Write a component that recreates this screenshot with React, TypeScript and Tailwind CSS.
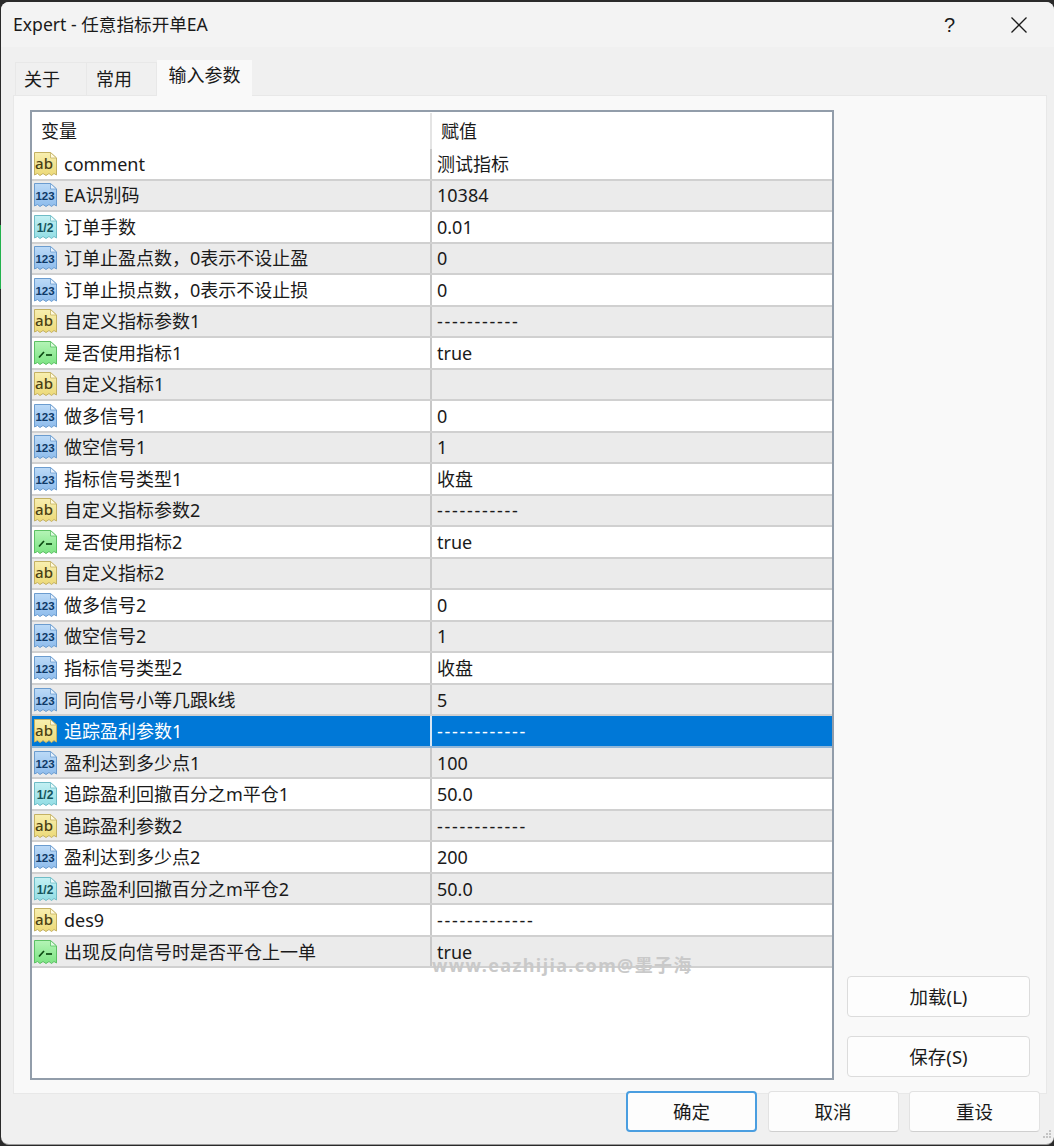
import React from "react";

type Kind = "ab" | "123" | "half" | "bool";
const rows: [Kind, string, string][] = [
  ["ab", "comment", "测试指标"],
  ["123", "EA识别码", "10384"],
  ["half", "订单手数", "0.01"],
  ["123", "订单止盈点数，0表示不设止盈", "0"],
  ["123", "订单止损点数，0表示不设止损", "0"],
  ["ab", "自定义指标参数1", "-----------"],
  ["bool", "是否使用指标1", "true"],
  ["ab", "自定义指标1", ""],
  ["123", "做多信号1", "0"],
  ["123", "做空信号1", "1"],
  ["123", "指标信号类型1", "收盘"],
  ["ab", "自定义指标参数2", "-----------"],
  ["bool", "是否使用指标2", "true"],
  ["ab", "自定义指标2", ""],
  ["123", "做多信号2", "0"],
  ["123", "做空信号2", "1"],
  ["123", "指标信号类型2", "收盘"],
  ["123", "同向信号小等几跟k线", "5"],
  ["ab", "追踪盈利参数1", "------------"],
  ["123", "盈利达到多少点1", "100"],
  ["half", "追踪盈利回撤百分之m平仓1", "50.0"],
  ["ab", "追踪盈利参数2", "------------"],
  ["123", "盈利达到多少点2", "200"],
  ["half", "追踪盈利回撤百分之m平仓2", "50.0"],
  ["ab", "des9", "-------------"],
  ["bool", "出现反向信号时是否平仓上一单", "true"],
];

const palette: Record<Kind, { top: string; bottom: string; stroke: string; ink: string; fold: string }> = {
  ab: { top: "#f8efb0", bottom: "#ecd977", stroke: "#c4b163", ink: "#4a4014", fold: "#fffbe0" },
  "123": { top: "#bcdaf7", bottom: "#8ebcec", stroke: "#6b9ccf", ink: "#0f3a68", fold: "#e6f1fc" },
  half: { top: "#c4f0f3", bottom: "#92dde4", stroke: "#6fbcc6", ink: "#14545c", fold: "#e8fafb" },
  bool: { top: "#b4f4b6", bottom: "#7ce483", stroke: "#5cc064", ink: "#0c4a12", fold: "#e0fbe1" },
};

function TypeIcon({ kind }: { kind: Kind }) {
  const c = palette[kind];
  const id = `grad-${kind}`;
  return (
    <svg width="25" height="26" viewBox="0 0 25 26" className="shrink-0">
      <defs>
        <linearGradient id={id} x1="0" y1="0" x2="0" y2="1">
          <stop offset="0" stopColor={c.top} />
          <stop offset="1" stopColor={c.bottom} />
        </linearGradient>
      </defs>
      <path
        d="M1.5 1.5H17.5L23.5 7V24L21 22.5L18.5 24.5L16 22.5L13 24.5L10 22.5L7 24.5L4.5 22.5L1.5 24Z"
        fill={`url(#${id})`}
        stroke={c.stroke}
        strokeWidth="1"
      />
      <path d="M17.5 1.5V7H23.5Z" fill={c.fold} stroke={c.stroke} strokeWidth="0.8" />
      {kind === "ab" && (
        <text x="11" y="18" textAnchor="middle" fontSize="15" fontWeight="500" fill={c.ink} fontFamily="'Noto Sans', sans-serif">
          ab
        </text>
      )}
      {kind === "123" && (
        <text x="12" y="18" textAnchor="middle" fontSize="11.5" fontWeight="700" fill={c.ink} fontFamily="'Liberation Sans', sans-serif">
          123
        </text>
      )}
      {kind === "half" && (
        <text x="12" y="18" textAnchor="middle" fontSize="12" fontWeight="700" fill={c.ink} fontFamily="'Liberation Sans', sans-serif">
          1/2
        </text>
      )}
      {kind === "bool" && (
        <>
          <path d="M6 17.5L11 12" fill="none" stroke={c.ink} strokeWidth="1.7" />
          <path d="M13 15H19" fill="none" stroke={c.ink} strokeWidth="1.7" />
        </>
      )}
    </svg>
  );
}

function Button({ label, className }: { label: string; className: string }) {
  return (
    <button className={`flex h-[41px] items-center justify-center rounded-[4px] bg-[#fdfdfd] text-[18.5px] text-[#1a1a1a] ${className}`}>
      {label}
    </button>
  );
}

export default function App() {
  return (
    <div className="relative h-[1146px] w-[1054px] overflow-hidden bg-[#2a2a2a] pl-px pt-[2px] font-['Noto_Sans','Noto_Sans_CJK_SC',sans-serif] text-[#1a1a1a]">
      <div className="absolute left-0 top-[225px] h-[64px] w-px bg-[#22b14c]" />
      <div className="flex h-[1143px] w-[1053px] flex-col overflow-hidden rounded-[8px] border-b border-[#9a9a9a] bg-[#f0f0f0]">
        <div className="flex h-[45px] shrink-0 items-center justify-between bg-[#f3f3f3] pl-[12px] pr-[26px] text-[17.6px]">
          <span>Expert - 任意指标开单EA</span>
          <div className="flex items-center gap-[55px]">
            <span className="font-['Liberation_Sans',sans-serif] text-[20px] font-light">?</span>
            <svg width="18" height="18" viewBox="0 0 18 18">
              <path d="M1.5 1.5L16.5 16.5M16.5 1.5L1.5 16.5" stroke="#1a1a1a" strokeWidth="1.3" fill="none" />
            </svg>
          </div>
        </div>

        <div className="flex h-[48px] shrink-0 items-end pl-[14px] text-[18px]">
          <div className="flex h-[33px] w-[72px] items-center border border-b-0 border-[#e8e8e8] bg-[#f0f0f0] pl-[8px]">关于</div>
          <div className="flex h-[33px] w-[70px] items-center border-r border-t border-[#e8e8e8] bg-[#f0f0f0] pl-[9px]">常用</div>
          <div className="relative top-px flex h-[36px] w-[95px] items-start justify-center bg-[#f9f9f9] pt-[2px]">输入参数</div>
        </div>

        <div className="ml-[12px] flex h-[999px] w-[1034px] shrink-0 border border-[#e8e8e8] bg-[#f9f9f9] pl-[16px] pt-[14px]">
          <div className="relative flex h-[970px] w-[804px] shrink-0 flex-col border-2 border-[#929daa] bg-white">
            <div className="flex h-[37px] shrink-0 pt-[1px] text-[18px]">
              <div className="flex w-[398px] items-center pl-[9px]">变量</div>
              <div className="flex items-center border-l-2 border-[#e4e4e4] pl-[9px]">赋值</div>
            </div>
            {rows.map(([kind, name, value], i) => {
              const selected = i === 18;
              const bg = selected ? "bg-[#0078d7] text-white border-[#93b7d8]" : i % 2 ? "bg-[#ebebeb] border-[#d0d0d0]" : "bg-white border-[#d0d0d0]";
              return (
                <div key={i} className={`flex h-[31.52px] shrink-0 items-center border-b-2 text-[18px] ${bg}`}>
                  <div className="flex h-full w-[398px] shrink-0 items-center gap-[6px] pl-px">
                    <TypeIcon kind={kind} />
                    <span className="whitespace-nowrap pt-px">{name}</span>
                  </div>
                  <div className={`flex h-full flex-1 items-center border-l-2 pl-[5px] pt-px ${selected ? "border-[#d8e6f3]" : "border-[#c8c8c8]"} ${value.startsWith("-") ? "tracking-[1.7px]" : ""}`}>
                    {value}
                  </div>
                </div>
              );
            })}
            <div className="absolute left-[400px] top-[840px] whitespace-nowrap text-[18px] font-bold tracking-[1.4px] text-[#c9c9c9]">
              www.eazhijia.com@墨子海
            </div>
          </div>
          <div className="ml-[13px] flex h-[970px] w-[183px] flex-col justify-end gap-[19px] pb-[3px]">
            <Button label="加载(L)" className="w-full border border-[#dcdcdc]" />
            <Button label="保存(S)" className="w-full border border-[#dcdcdc]" />
          </div>
        </div>

        <div className="relative -mt-[3px] flex justify-end gap-[10.5px] pr-[14px]">
          <Button label="确定" className="w-[131px] border-2 border-[#4a9ee0]" />
          <Button label="取消" className="w-[131px] border border-[#e2e2e2] border-b-[#cfcfcf]" />
          <Button label="重设" className="w-[131px] border border-[#e2e2e2] border-b-[#cfcfcf]" />
          <svg width="12" height="12" viewBox="0 0 12 12" className="absolute bottom-[-9px] right-[2px]">
            <path d="M9 1h2v2H9zM6 4h2v2H6zM9 4h2v2H9zM3 7h2v2H3zM6 7h2v2H6zM9 7h2v2H9z" fill="#c4c4c4" />
          </svg>
        </div>
      </div>
    </div>
  );
}
